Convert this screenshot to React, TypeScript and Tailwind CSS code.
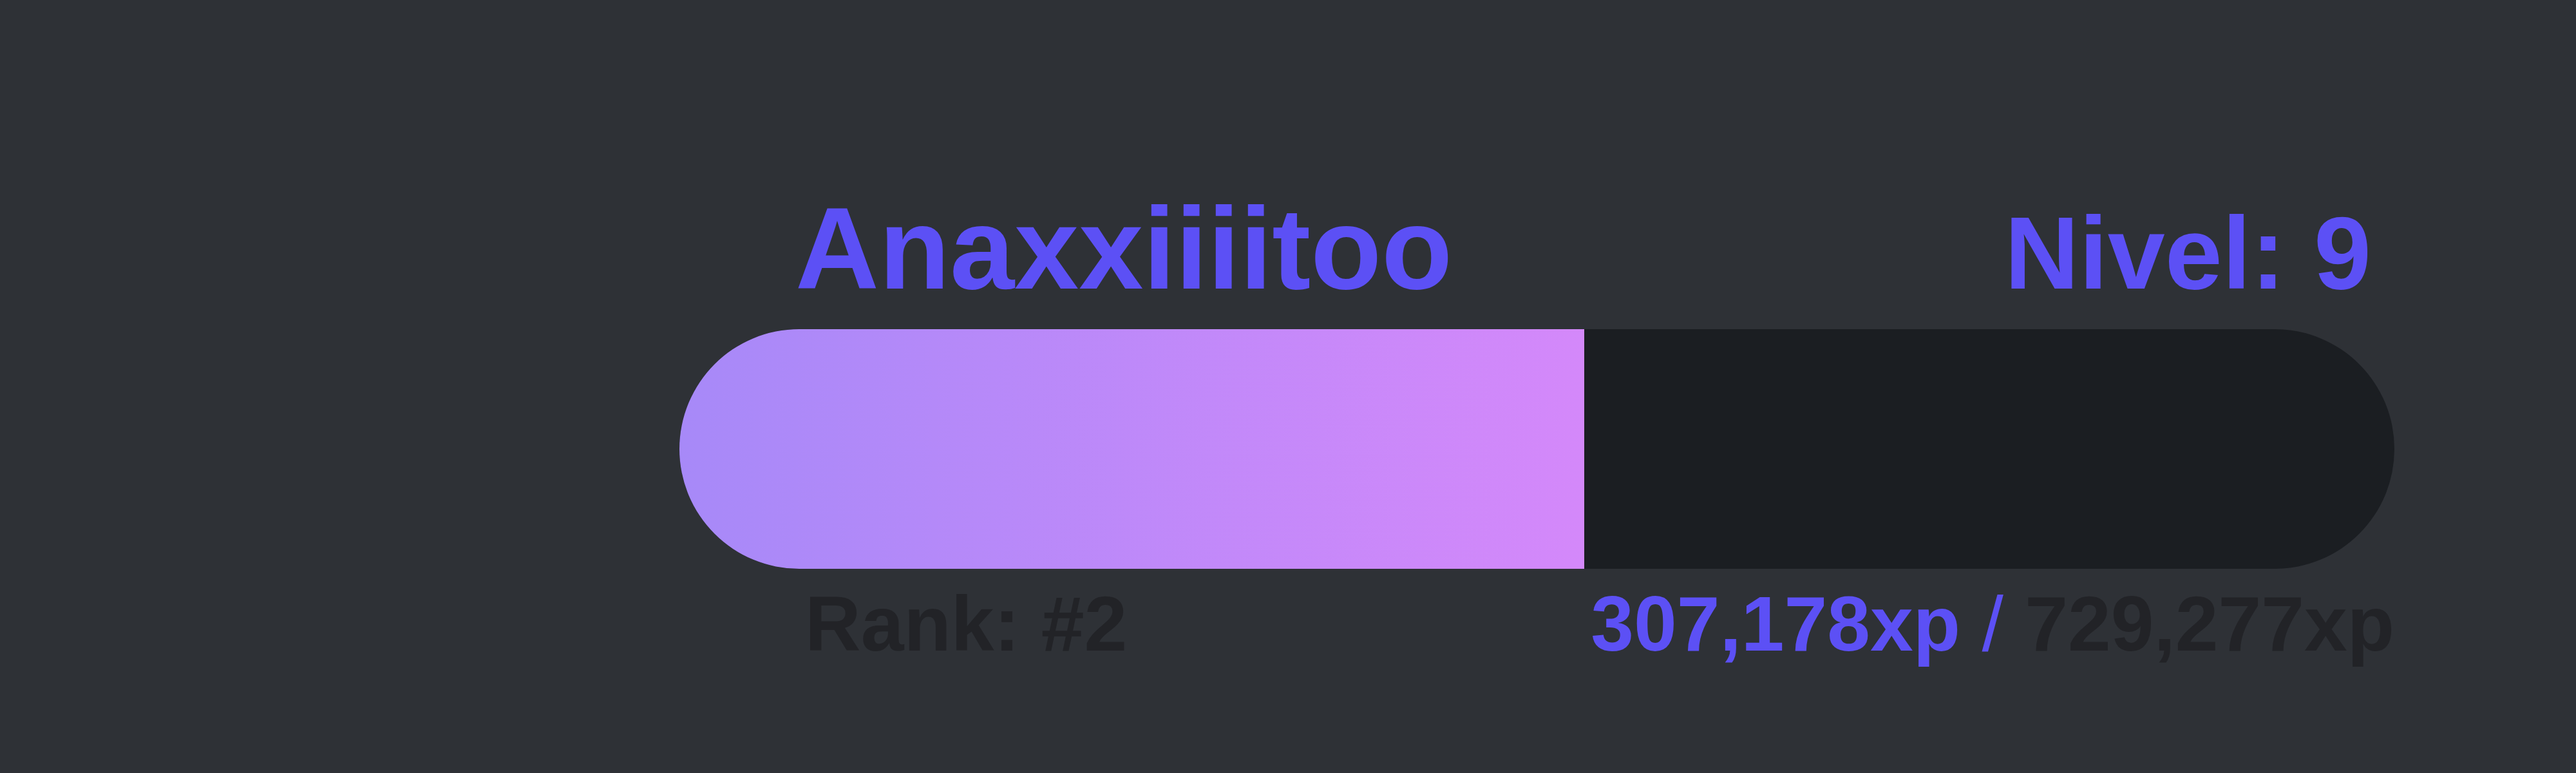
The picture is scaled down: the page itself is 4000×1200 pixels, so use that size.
const USER = {
  name: "Anaxxiiiitoo",
  level: 9,
  rank: 2,
  xp: 307178,
  nextXp: 729277,
};

const fmt = (n: number) => n.toLocaleString("en-US");

export default function App() {
  return (
    <div
      className="w-[4000px] h-[1200px] bg-[#2e3136] pt-[296px] pl-[1055px]"
      style={{ fontFamily: '"Liberation Sans", Arial, sans-serif' }}
    >
      <div className="w-[2663px] flex flex-col font-bold">
        {/* Name + level */}
        <div className="flex items-baseline justify-between leading-none">
          <span className="ml-[180px] text-[180px] text-[#5c50f5]">{USER.name}</span>
          <span className="mr-[36px] text-[160px] text-[#5c50f5]">Nivel: {USER.level}</span>
        </div>

        {/* Progress bar */}
        <div className="mt-[35px] h-[372px] w-full rounded-full bg-[#1b1e22] overflow-hidden">
          <div className="h-full w-[1405px] bg-gradient-to-r from-[#a789f8] to-[#d488fa]" />
        </div>

        {/* Rank + xp */}
        <div className="mt-[25px] flex items-baseline justify-between leading-none text-[120px]">
          <span className="ml-[195px] text-[#222327]">Rank: #{USER.rank}</span>
          <span>
            <span className="text-[#5c50f5]">{fmt(USER.xp)}xp</span>
            <span className="text-[#5c50f5] font-normal"> /</span>
            <span className="text-[#222327]"> {fmt(USER.nextXp)}xp</span>
          </span>
        </div>
      </div>
    </div>
  );
}
